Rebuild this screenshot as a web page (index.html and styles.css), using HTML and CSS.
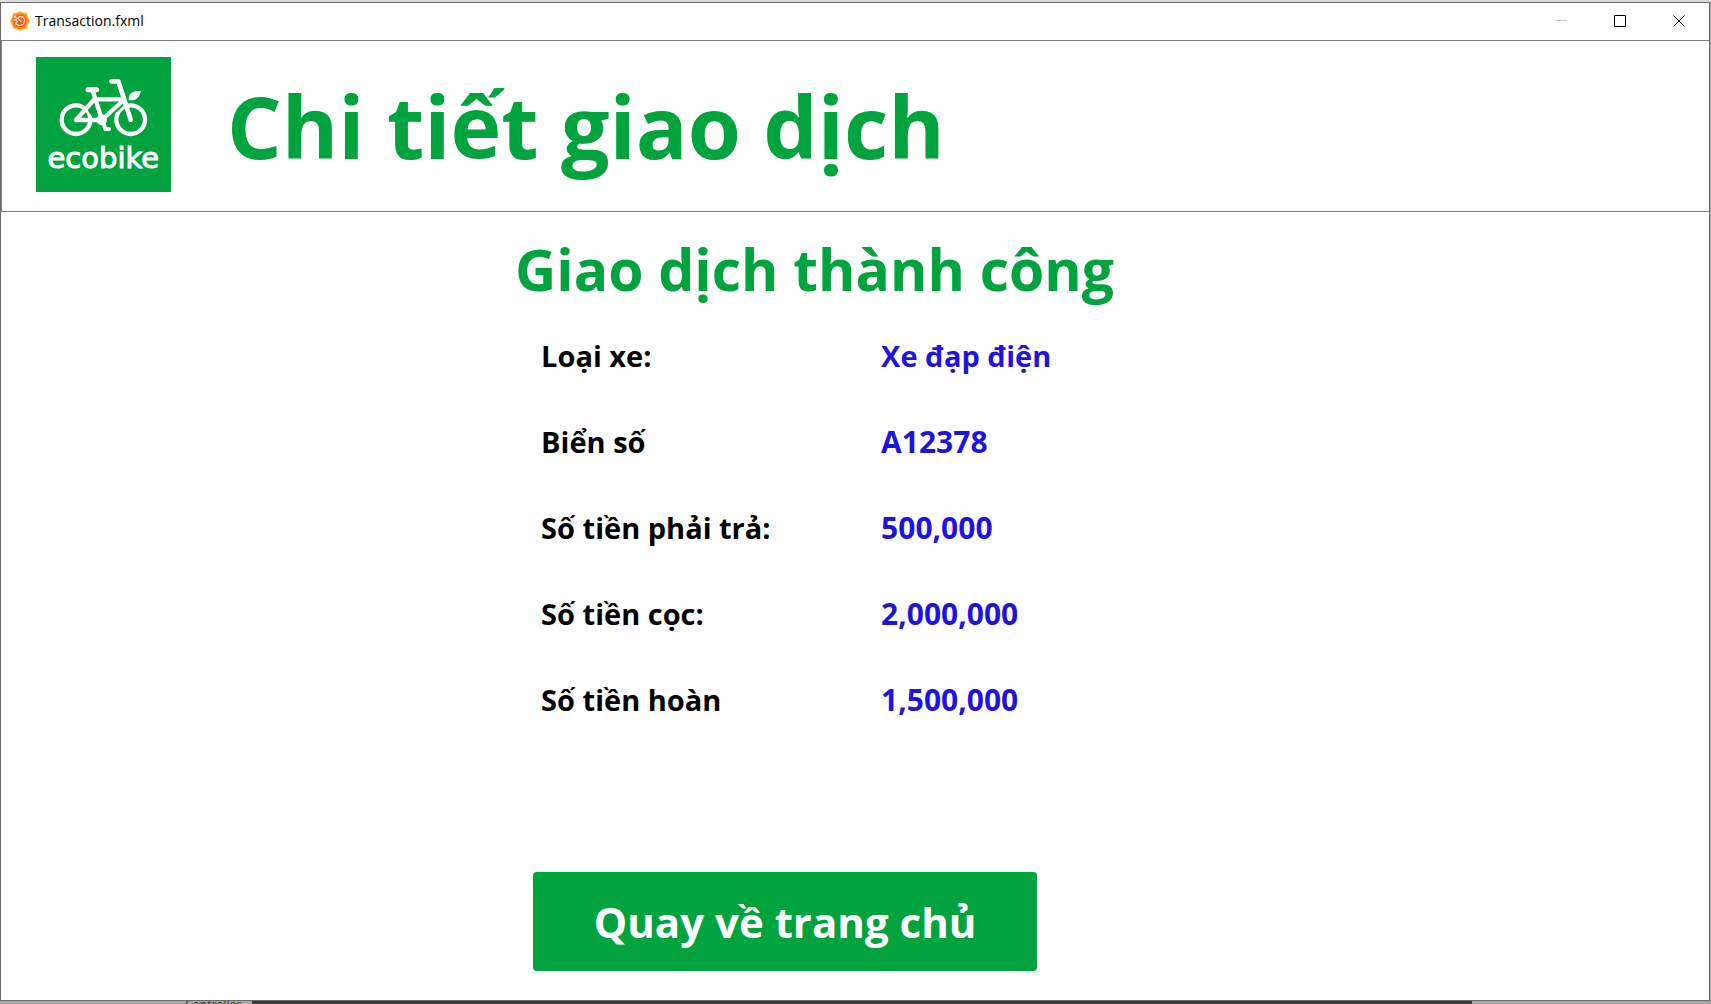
FILE: index.html
```html
<!DOCTYPE html>
<html lang="vi">
<head>
<meta charset="utf-8">
<title>Transaction.fxml</title>
<link rel="stylesheet" href="styles.css">
</head>
<body>
<div class="desktop-top"></div>
<div class="window">
  <div class="titlebar">
    <svg class="app-icon" viewBox="0 0 20 20" aria-hidden="true">
      <path d="M10 0L13 1.500L17 2.500L18 6.500L20 10L18 13.500L17 17.500L13 18.500L10 20L7 18.500L3 17.500L2 13.500L0 10L2 6.500L3 2.500L7 1.500Z" fill="#fbb01e"/>
      <circle cx="10" cy="10" r="8" fill="#f98a1c"/>
      <circle cx="10" cy="10" r="6.500" fill="#f4581c"/>
      <path d="M4 5L7.500 7.500L9.500 5.500L13 6L15 9.500L13 13.500L9 14.500L5.500 12.500L7 10.500L4.500 9L7.500 7.500L11.500 10.500" fill="none" stroke="#ffe6d2" stroke-width="1.200"/>
    </svg>
    <span class="titlebar-text">Transaction.fxml</span>
    <div class="controls">
      <button class="control control-off" aria-label="Minimize" disabled><svg viewBox="0 0 12 12"><path d="M0 5.500H12"/></svg></button>
      <button class="control" aria-label="Maximize"><svg viewBox="0 0 12 12"><path d="M.5 .5H11.500V11.500H.5Z"/></svg></button>
      <button class="control" aria-label="Close"><svg viewBox="0 0 12 12"><path d="M.5 .5L11.500 11.500M11.500 .5L.5 11.500"/></svg></button>
    </div>
  </div>
  <header class="header">
    <svg class="logo" viewBox="48 51 405 405" role="img" aria-label="ecobike">
      <rect x="48" y="51" width="405" height="405" fill="#00a33e"/>
      <g fill="none" stroke="#fff" stroke-width="13">
        <circle cx="168" cy="239" r="43"/>
        <circle cx="332" cy="239" r="43"/>
      </g>
      <path d="M194 192L222 232M288 214L312 190" stroke="#00a33e" stroke-width="7"/>
      <g fill="none" stroke="#fff" stroke-width="13" stroke-linecap="round" stroke-linejoin="round">
        <path d="M168 240L222 179M168 240H245L308 183M222 178H308M218 152L246 240"/>
        <path d="M204 149H230" stroke-width="15"/>
        <path d="M274 124H295L332 239" stroke-width="14"/>
        <path d="M246 238L256 267H267" stroke-width="12"/>
      </g>
      <circle cx="245" cy="239" r="16" fill="#fff"/>
      <path d="M326 180C324 158 342 151 363 153C358 174 345 184 326 180Z" fill="#fff"/>
      <text class="logo-text" x="250" y="383" text-anchor="middle">ecobike</text>
    </svg>
    <h1 class="title">Chi tiết giao dịch</h1>
  </header>
  <main class="content">
    <h2 class="subtitle">Giao dịch thành công</h2>
    <table class="details">
      <tr><th scope="row">Loại xe:</th><td>Xe đạp điện</td></tr>
      <tr><th scope="row">Biển số</th><td class="number">A12378</td></tr>
      <tr><th scope="row">Số tiền phải trả:</th><td class="number">500,000</td></tr>
      <tr><th scope="row">Số tiền cọc:</th><td class="number">2,000,000</td></tr>
      <tr><th scope="row">Số tiền hoàn</th><td class="number">1,500,000</td></tr>
    </table>
    <button class="home">Quay về trang chủ</button>
  </main>
</div>
<div class="desktop-bottom"><span class="behind-label">Controller</span><span class="behind-canvas"></span></div>
</body>
</html>
```
FILE: styles.css
```css
* { box-sizing: border-box; }
body {
  margin: 0;
  min-height: 100vh;
  display: flex;
  flex-direction: column;
  background: #a8a6a6;
  font-family: "Open Sans", "Noto Sans", sans-serif;
}
.desktop-top { height: 2px; background: #dcdcdc; }
.window {
  flex: 1;
  display: flex;
  flex-direction: column;
  margin-right: 1px;
  border: 1px solid #6b6b6b;
  background: #fff;
}
.titlebar { display: flex; align-items: center; height: 37px; padding: 0 1px 1px 9px; }
.app-icon { width: 20px; height: 20px; margin-right: 5px; }
.titlebar-text { font-size: 14px; line-height: 20px; color: #000; }
.controls { display: flex; margin-left: auto; }
.control {
  display: grid;
  place-items: center;
  width: 59px;
  height: 36px;
  padding: 0;
  border: 0;
  background: none;
}
.control svg { width: 12px; height: 12px; fill: none; stroke: #000; }
.control-off svg { stroke: #c8c8c8; }
.header {
  display: flex;
  align-items: center;
  height: 172px;
  padding: 0 0 4px 34px;
  border: 1px solid #808080;
  border-right: 0;
}
.logo { width: 135px; height: 135px; margin-right: 56px; }
.logo-text {
  font-family: "DejaVu Sans", sans-serif;
  font-size: 87px;
  fill: #fff;
  stroke: #fff;
  stroke-width: 3px;
}
.title { margin: 0; padding-top: 4px; font-size: 86px; line-height: 120px; font-weight: 700; color: #00a33e; }
.content { flex: 1; padding: 16px 0 24px 30.1%; }
.subtitle { margin: 0; font-size: 57px; line-height: 82px; font-weight: 700; color: #00a33e; }
.details { border-collapse: collapse; margin: 3px 0 0 26px; font-size: 29px; line-height: 40px; font-weight: 700; }
.details th, .details td { height: 86px; padding: 0; text-align: left; font-weight: 700; }
.details th { width: 340px; color: #000; }
.details td { color: #1f13e0; }
.details .number { font-size: 30px; }
.home {
  display: block;
  width: 504px;
  height: 99px;
  margin: 129px 0 0 18px;
  padding: 0;
  border: 0;
  border-radius: 4px;
  background: #00a33e;
  color: #fff;
  font: 700 42px/60px "Open Sans", "Noto Sans", sans-serif;
}
.desktop-bottom { display: flex; height: 3px; }
.behind-label {
  width: 252px;
  height: 3px;
  padding-left: 185px;
  overflow: hidden;
  font-size: 12px;
  line-height: 8px;
  color: #333;
}
.behind-canvas { flex: 1; margin-right: 239px; background: #3c3c3c; }
```
